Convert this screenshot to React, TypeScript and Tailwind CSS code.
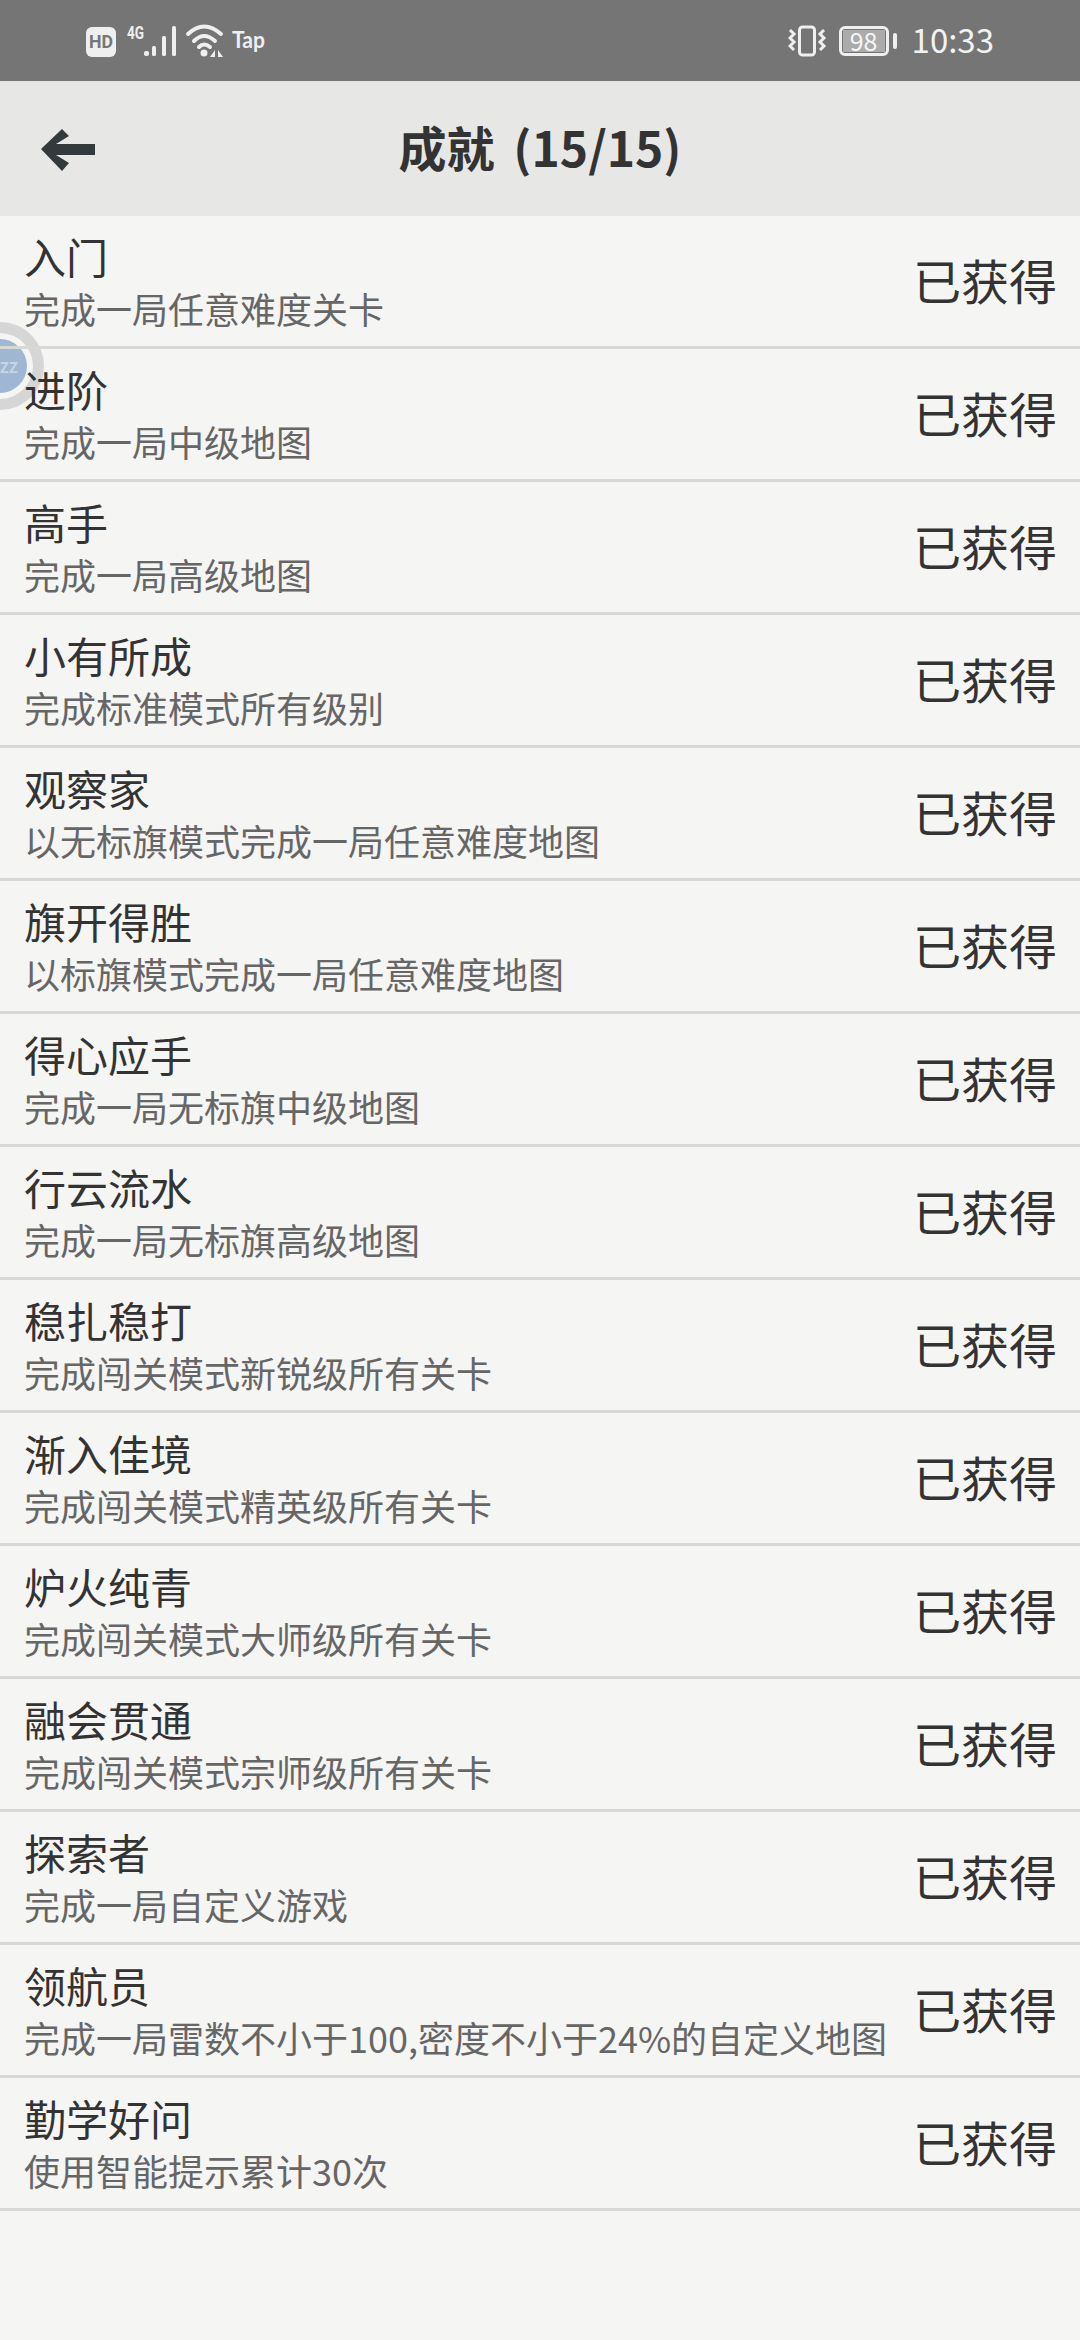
const achievements = [
  ["入门", "完成一局任意难度关卡"],
  ["进阶", "完成一局中级地图"],
  ["高手", "完成一局高级地图"],
  ["小有所成", "完成标准模式所有级别"],
  ["观察家", "以无标旗模式完成一局任意难度地图"],
  ["旗开得胜", "以标旗模式完成一局任意难度地图"],
  ["得心应手", "完成一局无标旗中级地图"],
  ["行云流水", "完成一局无标旗高级地图"],
  ["稳扎稳打", "完成闯关模式新锐级所有关卡"],
  ["渐入佳境", "完成闯关模式精英级所有关卡"],
  ["炉火纯青", "完成闯关模式大师级所有关卡"],
  ["融会贯通", "完成闯关模式宗师级所有关卡"],
  ["探索者", "完成一局自定义游戏"],
  ["领航员", "完成一局雷数不小于100,密度不小于24%的自定义地图"],
  ["勤学好问", "使用智能提示累计30次"],
];

const StatusLeft = () => (
  <svg width="186" height="50" viewBox="0 0 186 50" className="text-[#efefef]">
    <rect x="2" y="11" width="30" height="30" rx="6" fill="currentColor" />
    <text x="5" y="32" fontSize="19" fontWeight="700" fill="#757575" fontFamily="Roboto, sans-serif" textLength="24" lengthAdjust="spacingAndGlyphs">HD</text>
    <text x="43" y="23" fontSize="19" fontWeight="700" fill="currentColor" fontFamily="Roboto, sans-serif" textLength="17" lengthAdjust="spacingAndGlyphs">4G</text>
    <rect x="60" y="35" width="5" height="5" rx="2" fill="currentColor" />
    <rect x="68" y="30" width="4" height="10" rx="1.5" fill="currentColor" />
    <rect x="78" y="20" width="4" height="20" rx="1.5" fill="currentColor" />
    <rect x="88" y="10" width="4" height="30" rx="1.5" fill="currentColor" />
    <path d="M104 18 Q120 3 137 18 M110 25 Q120 15 131 25 M115 31 Q120 26 126 31" fill="none" stroke="currentColor" strokeWidth="4" strokeLinecap="round" />
    <circle cx="120" cy="37" r="3.5" fill="currentColor" />
    <path d="M131 34 v7 h-5z M134 34 v7 h5z" fill="currentColor" />
    <text x="148" y="32" fontSize="22" fontWeight="700" fill="currentColor" fontFamily="Lato, sans-serif" textLength="33" lengthAdjust="spacingAndGlyphs">Tap</text>
  </svg>
);

const StatusRight = () => (
  <div className="flex items-center">
    <svg width="40" height="36" viewBox="0 0 40 36" className="text-[#efefef]">
      <rect x="11.5" y="4" width="15" height="28" rx="3" fill="none" stroke="currentColor" strokeWidth="3" />
      <path d="M2 7 l4 4 l-4 4 l4 4 l-4 4 l4 4 M36 7 l-4 4 l4 4 l-4 4 l4 4 l-4 4" fill="none" stroke="currentColor" strokeWidth="3" />
    </svg>
    <div className="ml-[11px] flex items-center">
      <div className="flex h-[30px] w-[50px] items-center rounded-[6px] border-[3px] border-[#efefef] p-[1px]">
        <div className="flex h-full w-full items-center justify-center bg-[#ababab] text-[25px] leading-none text-[#f5f5f5]">98</div>
      </div>
      <div className="ml-[4px] h-[16px] w-[4px] rounded-sm bg-[#efefef]" />
    </div>
    <span className="mb-[2px] ml-[15px] text-[33px] leading-none text-[#f2f2f2]">10:33</span>
  </div>
);

const FloatingBall = () => (
  <div className="absolute left-[-44px] top-[322px] flex h-[88px] w-[88px] items-center justify-center rounded-full bg-[#d6d6d6]">
    <div className="flex h-[66px] w-[66px] items-center justify-center rounded-full bg-[#f5f5f4]">
      <div className="flex h-[54px] w-[54px] items-center justify-end rounded-full bg-[#a0b7d3] pr-[9px] text-[15px] font-bold leading-none text-[#c8d5e4]">
        ZZ
      </div>
    </div>
  </div>
);

export default function App() {
  return (
    <div
      className="relative h-[2340px] w-[1080px] overflow-hidden bg-[#f5f5f4]"
      style={{ fontFamily: '"Noto Sans CJK SC", "Noto Sans", sans-serif' }}
    >
      <div className="flex h-[81px] items-center justify-between bg-[#757575] pl-[84px] pr-[86px]">
        <StatusLeft />
        <StatusRight />
      </div>

      <header className="relative flex h-[135px] items-center justify-center bg-[#e7e7e5]">
        <svg width="58" height="46" viewBox="0 0 58 46" className="absolute left-[39px] top-[46px] text-[#333a3c]">
          <path d="M2 22 L23 2 L30 9 L17 17 H56 V28 H17 L30 36 L23 44 Z" fill="currentColor" />
        </svg>
        <h1 className="mb-[6px] text-[48px] font-bold leading-none text-[#333] [word-spacing:8px]">成就 (15/15)</h1>
      </header>

      <FloatingBall />

      <ul className="relative">
        {achievements.map(([title, desc]) => (
          <li
            key={title}
            className="flex h-[133px] items-center justify-between border-b-[3px] border-[#d8d8d6] pl-6 pr-[23px]"
          >
            <div>
              <div className="mt-[2px] text-[42px] leading-[54px] text-[#333]">{title}</div>
              <div className="-mt-[2px] text-[36px] leading-[54px] text-[#666]">{desc}</div>
            </div>
            <span className="mb-[5px] text-[48px] leading-none text-[#333]">已获得</span>
          </li>
        ))}
      </ul>
    </div>
  );
}
